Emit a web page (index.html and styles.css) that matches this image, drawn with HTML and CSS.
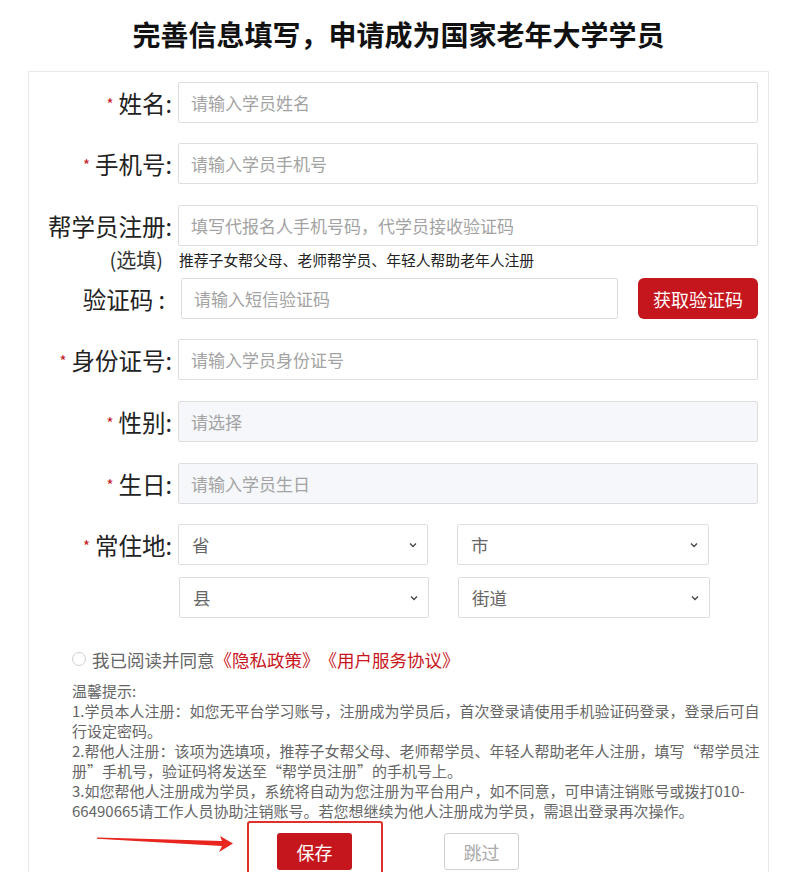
FILE: index.html
```html
<!DOCTYPE html>
<html lang="zh-CN">
<head>
<meta charset="UTF-8">
<meta name="viewport" content="width=device-width, initial-scale=1.0">
<title>完善信息填写</title>
<link rel="stylesheet" href="styles.css">
</head>
<body>
<div class="page">
    <h1 class="title">完善信息填写，申请成为国家老年大学学员</h1>
    <div class="card">
        <div class="row row-tight">
            <label class="label"><span class="star">*</span>姓名:</label>
            <input class="input" type="text" placeholder="请输入学员姓名">
        </div>
        <div class="row">
            <label class="label"><span class="star">*</span>手机号:</label>
            <input class="input" type="text" placeholder="请输入学员手机号">
        </div>
        <div class="row row-helper">
            <label class="label">帮学员注册:</label>
            <input class="input" type="text" placeholder="填写代报名人手机号码，代学员接收验证码">
        </div>
        <div class="hint-row">
            <span class="hint-label">(选填)</span>
            <span class="hint-text">推荐子女帮父母、老师帮学员、年轻人帮助老年人注册</span>
        </div>
        <div class="row row-tight">
            <label class="label label-code">验证码 :</label>
            <input class="input input-code" type="text" placeholder="请输入短信验证码">
            <button class="btn-code">获取验证码</button>
        </div>
        <div class="row">
            <label class="label"><span class="star">*</span>身份证号:</label>
            <input class="input" type="text" placeholder="请输入学员身份证号">
        </div>
        <div class="row">
            <label class="label"><span class="star">*</span>性别:</label>
            <input class="input input-disabled" type="text" placeholder="请选择" readonly>
        </div>
        <div class="row row-tight">
            <label class="label"><span class="star">*</span>生日:</label>
            <input class="input input-disabled" type="text" placeholder="请输入学员生日" readonly>
        </div>
        <div class="row row-area">
            <label class="label"><span class="star">*</span>常住地:</label>
            <div class="select select-left"><span>省</span><svg width="8" height="6" viewBox="0 0 8 6"><path d="M1 1.5 L4 4.5 L7 1.5" fill="none" stroke="#444" stroke-width="1.3"/></svg></div>
            <div class="select"><span>市</span><svg width="8" height="6" viewBox="0 0 8 6"><path d="M1 1.5 L4 4.5 L7 1.5" fill="none" stroke="#444" stroke-width="1.3"/></svg></div>
        </div>
        <div class="row row-area2">
            <div class="select select-left"><span>县</span><svg width="8" height="6" viewBox="0 0 8 6"><path d="M1 1.5 L4 4.5 L7 1.5" fill="none" stroke="#444" stroke-width="1.3"/></svg></div>
            <div class="select"><span>街道</span><svg width="8" height="6" viewBox="0 0 8 6"><path d="M1 1.5 L4 4.5 L7 1.5" fill="none" stroke="#444" stroke-width="1.3"/></svg></div>
        </div>

        <div class="agree">
            <span class="radio"></span>
            <span>我已阅读并同意</span><a class="link">《隐私政策》</a><a class="link">《用户服务协议》</a>
        </div>

        <div class="tips">
            <p>温馨提示:</p>
            <p>1.学员本人注册：如您无平台学习账号，注册成为学员后，首次登录请使用手机验证码登录，登录后可自行设定密码。</p>
            <p>2.帮他人注册：该项为选填项，推荐子女帮父母、老师帮学员、年轻人帮助老年人注册，填写“帮学员注册”手机号，验证码将发送至“帮学员注册”的手机号上。</p>
            <p>3.如您帮他人注册成为学员，系统将自动为您注册为平台用户，如不同意，可申请注销账号或拨打010-66490665请工作人员协助注销账号。若您想继续为他人注册成为学员，需退出登录再次操作。</p>
        </div>

        <div class="actions">
            <svg class="arrow" width="150" height="25" viewBox="0 0 150 25">
                <polygon points="8,6.5 133,10 131,5 144,12.5 130,21 133,15 8,7.8" fill="#e8251f"/>
            </svg>
            <span class="highlight"></span>
            <button class="btn-save">保存</button>
            <button class="btn-skip">跳过</button>
        </div>
    </div>
</div>
</body>
</html>
```

FILE: styles.css
```css
body {
    margin: 0;
    background-color: #fff;
    font-family: "Noto Sans CJK SC", "Liberation Sans", sans-serif;
    color: #222;
    overflow: hidden;
}

.page {
    margin-left: 28px;
    width: 741px;
}

.title {
    margin: 14px 0 17px;
    text-align: center;
    font-size: 28px;
    line-height: 40px;
    font-weight: bold;
    color: #111;
}

.card {
    border: 1px solid #e9e9e9;
    border-bottom: none;
    padding: 10px 10px 0 0;
    min-height: 820px;
}

.row {
    display: flex;
    align-items: center;
    margin-bottom: 21px;
}

.row-tight {
    margin-bottom: 20px;
}

.label {
    width: 143px;
    flex-shrink: 0;
    margin-right: 6px;
    text-align: right;
    font-size: 23.5px;
    color: #222;
}

.star {
    color: #c8161d;
    font-size: 15px;
    margin-right: 5px;
    vertical-align: 3px;
}

.input {
    flex: 1;
    height: 41px;
    box-sizing: border-box;
    border: 1px solid #dedede;
    border-radius: 2px;
    padding: 0 12px;
    font-family: inherit;
    font-size: 17px;
    color: #333;
    background-color: #fff;
    outline: none;
}

.input::placeholder {
    color: #a3a3a3;
}

.input-disabled {
    background-color: #f5f7fa;
}

/* helper phone + its hint line */
.row-helper {
    margin-bottom: 0;
}

.hint-row {
    display: flex;
    align-items: center;
    height: 20px;
    margin: 3px 0 9px;
}

.hint-label {
    width: 134px;
    text-align: right;
    font-size: 20px;
    color: #333;
}

.hint-text {
    margin-left: 16px;
    font-size: 14.8px;
    color: #222;
}

/* sms code */
.label-code {
    padding-right: 7px;
    box-sizing: border-box;
}

.input-code {
    margin-left: 3px;
}

.btn-code {
    width: 120px;
    height: 41px;
    margin-left: 20px;
    border: none;
    border-radius: 6px;
    background-color: #c5161d;
    color: #fff;
    font-family: inherit;
    font-size: 18px;
}

/* area selects */
.row-area {
    margin-bottom: 12px;
}

.row-area2 {
    padding-left: 150px;
    margin-bottom: 0;
}

.select {
    width: 252px;
    height: 41px;
    box-sizing: border-box;
    display: flex;
    align-items: center;
    justify-content: space-between;
    padding: 0 10px 0 13px;
    border: 1px solid #dedede;
    border-radius: 2px;
    font-size: 17.5px;
    color: #666;
}

.select-left {
    width: 250px;
    margin-right: 29px;
}

/* agreement */
.agree {
    display: flex;
    align-items: center;
    margin: 29px 0 0 43px;
    height: 24px;
    font-size: 17.5px;
    color: #666;
}

.radio {
    width: 14px;
    height: 14px;
    box-sizing: border-box;
    border: 1px solid #cfcfcf;
    border-radius: 50%;
    margin-right: 6px;
}

.link {
    color: #c8161d;
}

.tips {
    margin: 10px -3px 0 43px;
    font-size: 15px;
    line-height: 20px;
    color: #666;
}

.tips p {
    margin: 0;
}

/* buttons */
.actions {
    position: relative;
    display: flex;
    margin-top: 12px;
    padding-left: 248px;
}

.btn-save {
    width: 75px;
    height: 37px;
    border: none;
    border-radius: 3px;
    background-color: #c5161d;
    color: #fff;
    font-family: inherit;
    font-size: 18px;
}

.btn-skip {
    width: 75px;
    height: 37px;
    margin-left: 92px;
    border: 1px solid #cfcfcf;
    border-radius: 3px;
    background-color: #fff;
    color: #aaa;
    font-family: inherit;
    font-size: 18px;
}

.highlight {
    position: absolute;
    left: 218px;
    top: -12px;
    width: 136px;
    height: 64px;
    box-sizing: border-box;
    border: 2px solid #e0302a;
    border-radius: 3px;
}

.arrow {
    position: absolute;
    left: 60px;
    top: -2px;
}
```
